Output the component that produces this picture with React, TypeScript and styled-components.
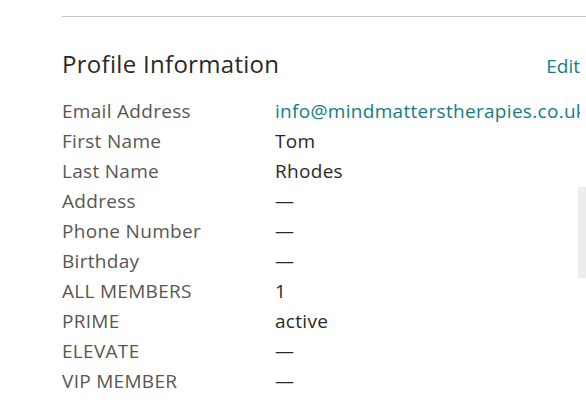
import React from "react";
import styled, { createGlobalStyle } from "styled-components";

const GlobalStyle = createGlobalStyle`
  html, body {
    margin: 0;
    padding: 0;
    background: #ffffff;
  }
  body {
    font-family: "Open Sans", "Noto Sans", sans-serif;
    overflow: hidden;
  }
`;

const Page = styled.div`
  position: relative;
  width: 586px;
  height: 412px;
  padding: 16px 6px 0 62px;
  box-sizing: border-box;
  overflow: hidden;
`;

const Divider = styled.hr`
  margin: 0 -6px 0 0;
  border: none;
  border-top: 1px solid #c4c4c4;
`;

const Header = styled.div`
  display: flex;
  justify-content: space-between;
  align-items: baseline;
  margin-top: 30px;
  margin-bottom: 16px;
`;

const Title = styled.h2`
  margin: 0;
  font-size: 24px;
  font-weight: 400;
  color: #2b2826;
  letter-spacing: 0.3px;
`;

const EditLink = styled.a`
  font-size: 19px;
  color: #137e83;
  text-decoration: none;
  cursor: pointer;
`;

const Fields = styled.dl`
  margin: 0;
  display: grid;
  grid-template-columns: 213px minmax(0, 1fr);
  grid-auto-rows: 30px;
  align-items: center;
  font-size: 19px;
  letter-spacing: 0.3px;
`;

const Label = styled.dt`
  color: #5a5552;
  white-space: nowrap;
`;

const Value = styled.dd<{ $link?: boolean }>`
  margin: 0;
  white-space: nowrap;
  overflow: hidden;
  color: ${(p) => (p.$link ? "#137e83" : "#2b2826")};
`;

const ScrollThumb = styled.div`
  position: absolute;
  right: 0;
  top: 187px;
  width: 8px;
  height: 91px;
  background: #eeede9;
`;

const fields: Array<{ label: string; value: string; link?: boolean }> = [
  { label: "Email Address", value: "info@mindmatterstherapies.co.uk", link: true },
  { label: "First Name", value: "Tom" },
  { label: "Last Name", value: "Rhodes" },
  { label: "Address", value: "—" },
  { label: "Phone Number", value: "—" },
  { label: "Birthday", value: "—" },
  { label: "ALL MEMBERS", value: "1" },
  { label: "PRIME", value: "active" },
  { label: "ELEVATE", value: "—" },
  { label: "VIP MEMBER", value: "—" },
];

const App: React.FC = () => (
  <>
    <GlobalStyle />
    <Page>
      <Divider />
      <Header>
        <Title>Profile Information</Title>
        <EditLink>Edit</EditLink>
      </Header>
      <Fields>
        {fields.map((f) => (
          <React.Fragment key={f.label}>
            <Label>{f.label}</Label>
            <Value $link={f.link}>{f.value}</Value>
          </React.Fragment>
        ))}
      </Fields>
      <ScrollThumb />
    </Page>
  </>
);

export default App;
